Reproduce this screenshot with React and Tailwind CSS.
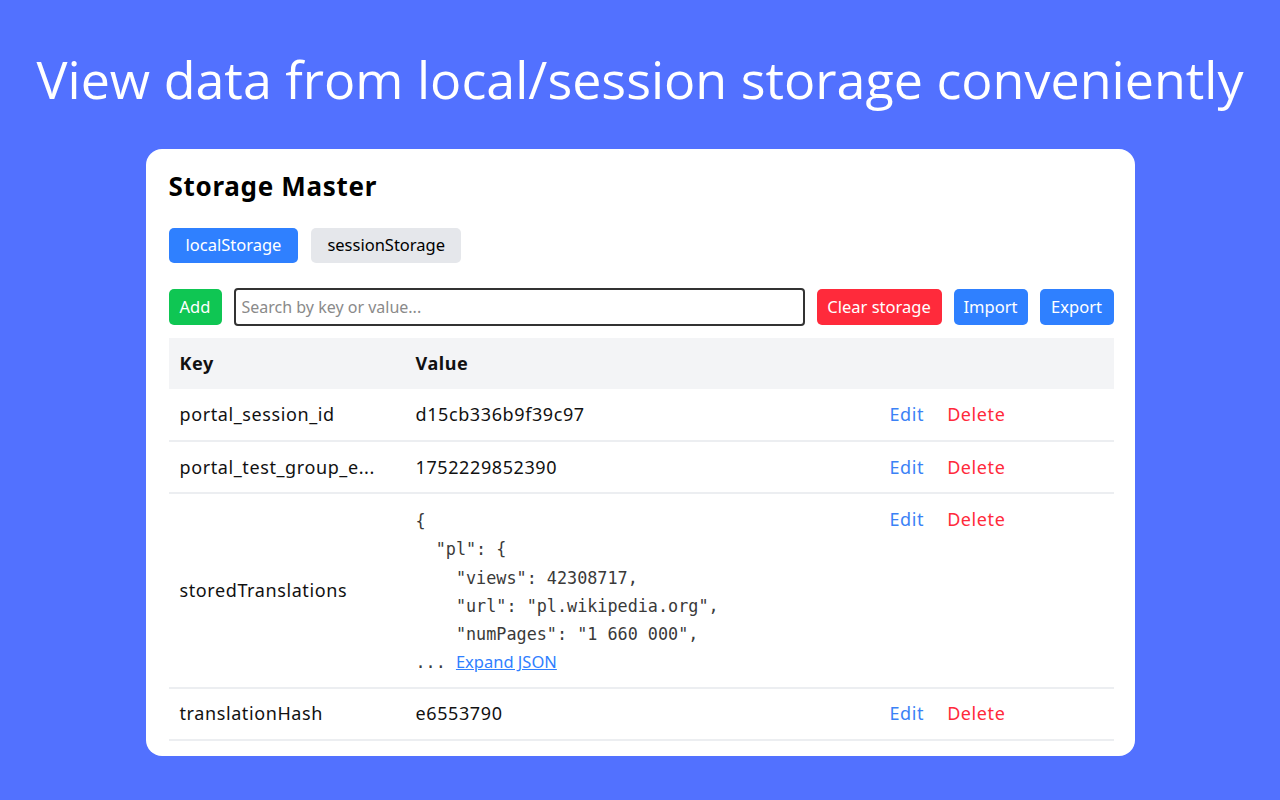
import React, { useState } from 'react';

const rows = [
  { key: 'portal_session_id', value: 'd15cb336b9f39c97' },
  { key: 'portal_test_group_e...', value: '1752229852390' },
  {
    key: 'storedTranslations',
    json: `{\n  "pl": {\n    "views": 42308717,\n    "url": "pl.wikipedia.org",\n    "numPages": "1 660 000",`,
  },
  { key: 'translationHash', value: 'e6553790' },
];

export default function App() {
  const [tab, setTab] = useState('local');
  const [query, setQuery] = useState('');

  return (
    <div className="w-[1280px] h-[800px] bg-[#5271ff] flex flex-col items-center overflow-hidden" style={{ fontFamily: '"Noto Sans", sans-serif' }}>
      <h1 className="mt-[44px] text-[52px] leading-[70px] text-white font-normal tracking-[0px]" style={{ fontFamily: '"Open Sans", sans-serif' }}>
        View data from local/session storage conveniently
      </h1>

      <div className="mt-[35px] w-[989px] bg-white rounded-[16px] pl-[23px] pr-[21px] pt-[20px] pb-[15px]">
        <h2 className="text-[26px] leading-[34px] font-bold text-black tracking-[0.7px]">Storage Master</h2>

        {/* Storage tabs */}
        <div className="mt-[25px] flex gap-[13px]">
          <button
            onClick={() => setTab('local')}
            className={`h-[35px] px-[17px] rounded-[5px] text-[16.5px] ${tab === 'local' ? 'bg-[#2f80ff] text-white' : 'bg-[#e5e7eb] text-black'}`}
          >
            localStorage
          </button>
          <button
            onClick={() => setTab('session')}
            className={`h-[35px] px-[16px] rounded-[5px] text-[16.5px] ${tab === 'session' ? 'bg-[#2f80ff] text-white' : 'bg-[#e5e7eb] text-black'}`}
          >
            sessionStorage
          </button>
        </div>

        {/* Toolbar */}
        <div className="mt-[25px] flex items-center gap-[12px]">
          <button className="h-[36px] w-[53px] rounded-[5px] bg-[#0fc653] text-white text-[16.5px]">Add</button>
          <input
            value={query}
            onChange={e => setQuery(e.target.value)}
            placeholder="Search by key or value..."
            className="h-[38px] flex-1 border-2 border-[#333] rounded-[4px] px-[6px] text-[16px] placeholder:text-[#8a8a8a] outline-none"
          />
          <button className="h-[36px] w-[125px] rounded-[5px] bg-[#ff2a3b] text-white text-[16.5px]">Clear storage</button>
          <button className="h-[36px] w-[74px] rounded-[5px] bg-[#2f80ff] text-white text-[16.5px]">Import</button>
          <button className="h-[36px] w-[74px] rounded-[5px] bg-[#2f80ff] text-white text-[16.5px]">Export</button>
        </div>

        {/* Table */}
        <table className="mt-[12px] w-full border-collapse table-fixed text-[18px] tracking-[0.6px] text-[#111]">
          <colgroup>
            <col className="w-[236px]" />
            <col className="w-[474px]" />
            <col />
          </colgroup>
          <thead>
            <tr className="bg-[#f3f4f6] h-[51px]">
              <th className="text-left font-bold px-[11px]">Key</th>
              <th className="text-left font-bold px-[11px]">Value</th>
              <th />
            </tr>
          </thead>
          <tbody>
            {rows.map(row => (
              <tr key={row.key} className="border-b-2 border-[#eceef1]">
                <td className="px-[11px] h-[52px] align-middle whitespace-nowrap">{row.key}</td>
                <td className={`px-[11px] ${row.json ? 'pt-[13px] pb-[10px] align-top' : 'align-middle'}`}>
                  {row.json ? (
                    <div className="text-[#3a3a3a] text-[16.8px] leading-[28.3px] tracking-normal" style={{ fontFamily: '"DejaVu Sans Mono", monospace' }}>
                      <pre className="whitespace-pre" style={{ fontFamily: 'inherit' }}>{row.json}</pre>
                      <div>
                        ... <a href="#" className="underline text-[#2f80ff] text-[16.5px]" style={{ fontFamily: '"Noto Sans", sans-serif' }}>Expand JSON</a>
                      </div>
                    </div>
                  ) : (
                    row.value
                  )}
                </td>
                <td className={`px-[11px] ${row.json ? 'align-top pt-[12px]' : 'align-middle'}`}>
                  <button className="text-[#3b82f6] mr-[23px]">Edit</button>
                  <button className="text-[#ff2a3b]">Delete</button>
                </td>
              </tr>
            ))}
          </tbody>
        </table>
      </div>
    </div>
  );
}
